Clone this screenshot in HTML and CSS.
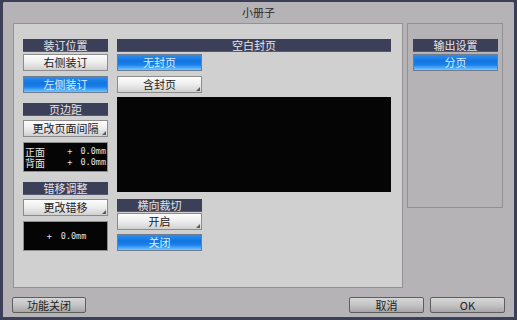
FILE: index.html
```html
<!DOCTYPE html>
<html lang="zh">
<head>
    <meta charset="UTF-8">
    <title>小册子</title>
    <link rel="stylesheet" href="styles.css">
</head>
<body>

<div class="window">
    <div class="title">小册子</div>

    <div class="content">
        <!-- Main settings panel -->
        <div class="panel main-panel">
            <div class="col left-col">
                <div class="head">装订位置</div>
                <div class="btn mt2">右侧装订</div>
                <div class="btn blue mt5">左侧装订</div>

                <div class="head mt10">页边距</div>
                <div class="btn more mt4">更改页面间隔</div>
                <div class="readout mt5">
                    <div class="labels">正面<br>背面</div>
                    <div class="sign">+<br>+</div>
                    <div class="val">0.0mm<br>0.0mm</div>
                </div>

                <div class="head mt10">错移调整</div>
                <div class="btn more mt4">更改错移</div>
                <div class="readout single mt5">
                    <span class="sign">+</span><span class="val">0.0mm</span>
                </div>
            </div>

            <div class="col mid-col">
                <div class="head">空白封页</div>
                <div class="btn blue narrow mt2">无封页</div>
                <div class="btn more narrow mt5">含封页</div>
                <div class="preview mt4"></div>

                <div class="head narrow mt7">横向裁切</div>
                <div class="btn more narrow mt1">开启</div>
                <div class="btn blue narrow mt4">关闭</div>
            </div>
        </div>

        <!-- Output settings panel -->
        <div class="panel side-panel">
            <div class="head">输出设置</div>
            <div class="btn blue mt2">分页</div>
        </div>
    </div>

    <div class="footer">
        <div class="fbtn wide">功能关闭</div>
        <div class="spacer"></div>
        <div class="fbtn">取消</div>
        <div class="fbtn">OK</div>
    </div>
</div>

</body>
</html>
```

FILE: styles.css
```css
/* Page base */
html, body {
    margin: 0;
    padding: 0;
    background-color: #3b3f57;
}

body {
    font-family: "Noto Sans CJK SC", "DejaVu Sans", sans-serif;
    font-size: 11px;
}

/* Outer dialog window */
.window {
    box-sizing: border-box;
    width: 517px;
    height: 320px;
    background-color: #b5b3b6;
    border: 3px solid #3b3f57;
    border-top-width: 2px;
    border-radius: 4px 4px 0 0;
    display: flex;
    flex-direction: column;
}

/* Title bar */
.title {
    height: 21px;
    line-height: 21px;
    text-align: center;
    color: #2a2a2a;
}

/* Row holding both panels */
.content {
    display: flex;
    align-items: flex-start;
    gap: 4px;
    padding-left: 10px;
}

.panel {
    box-sizing: border-box;
    border: 1px solid #939194;
}

.main-panel {
    width: 390px;
    height: 265px;
    background-color: #d0d0d0;
    display: flex;
    gap: 9px;
    padding: 15px 0 0 9px;
}

.side-panel {
    width: 96px;
    height: 185px;
    background-color: #b5b3b6;
    padding: 15px 0 0 5px;
    display: flex;
    flex-direction: column;
}

.side-panel .head,
.side-panel .btn {
    width: 85px;
}

.col {
    display: flex;
    flex-direction: column;
}

.left-col {
    width: 85px;
}

.mid-col {
    width: 274px;
}

/* Section header bars */
.head {
    box-sizing: border-box;
    height: 13px;
    background-color: #3b3f58;
    border-bottom: 1px solid #55596f;
    color: #e6e6ea;
    display: flex;
    align-items: center;
    justify-content: center;
    line-height: 1;
}

/* Buttons */
.btn {
    box-sizing: border-box;
    position: relative;
    height: 17px;
    border: 1px solid #8c8c8c;
    background: linear-gradient(#fdfdfd, #efefef 45%, #dcdcdc 80%, #cfcfcf);
    color: #202020;
    display: flex;
    align-items: center;
    justify-content: center;
    line-height: 1;
}

.btn.blue {
    border-color: #6f7c8e;
    background: linear-gradient(#2c8ef0, #1275e0 40%, #1b80ea 65%, #5ab2fb 90%, #79c6ff);
    color: #d9ecff;
}

/* Small triangle marking buttons that open a sub dialog */
.btn.more::after {
    content: "";
    position: absolute;
    right: 1px;
    bottom: 1px;
    border-left: 4px solid transparent;
    border-bottom: 4px solid #5a5a5a;
}

.narrow {
    width: 85px;
}

/* Black value displays */
.readout {
    box-sizing: border-box;
    height: 30px;
    background-color: #050505;
    border: 1px solid #8e8e8e;
    color: #e4e4e4;
    padding: 3px 1px 0 1px;
    display: flex;
    line-height: 11px;
}

.readout .labels {
    font-size: 10px;
    flex-grow: 1;
}

.readout .sign,
.readout .val {
    font-family: "DejaVu Sans Mono", monospace;
    font-size: 8.5px;
}

.readout .sign {
    margin-right: 8px;
}

.readout.single {
    align-items: center;
    justify-content: center;
    padding: 0 0 0 2px;
}

.readout.single .sign {
    margin-right: 9px;
}

.preview {
    box-sizing: border-box;
    height: 95px;
    background-color: #050505;
}

/* Bottom button row */
.footer {
    display: flex;
    gap: 6px;
    padding: 9px 9px 0 9px;
}

.spacer {
    flex-grow: 1;
}

.fbtn {
    box-sizing: border-box;
    width: 75px;
    height: 16px;
    border: 1px solid #5e5e5e;
    border-radius: 2px;
    background: linear-gradient(#d6d6d6, #c4c4c4 50%, #a6a6a6);
    color: #222;
    display: flex;
    align-items: center;
    justify-content: center;
    line-height: 1;
}

.fbtn.wide {
    width: 74px;
}

/* Spacing helpers */
.mt1 { margin-top: 1px; }
.mt2 { margin-top: 2px; }
.mt4 { margin-top: 4px; }
.mt5 { margin-top: 5px; }
.mt7 { margin-top: 7px; }
.mt10 { margin-top: 10px; }
```
